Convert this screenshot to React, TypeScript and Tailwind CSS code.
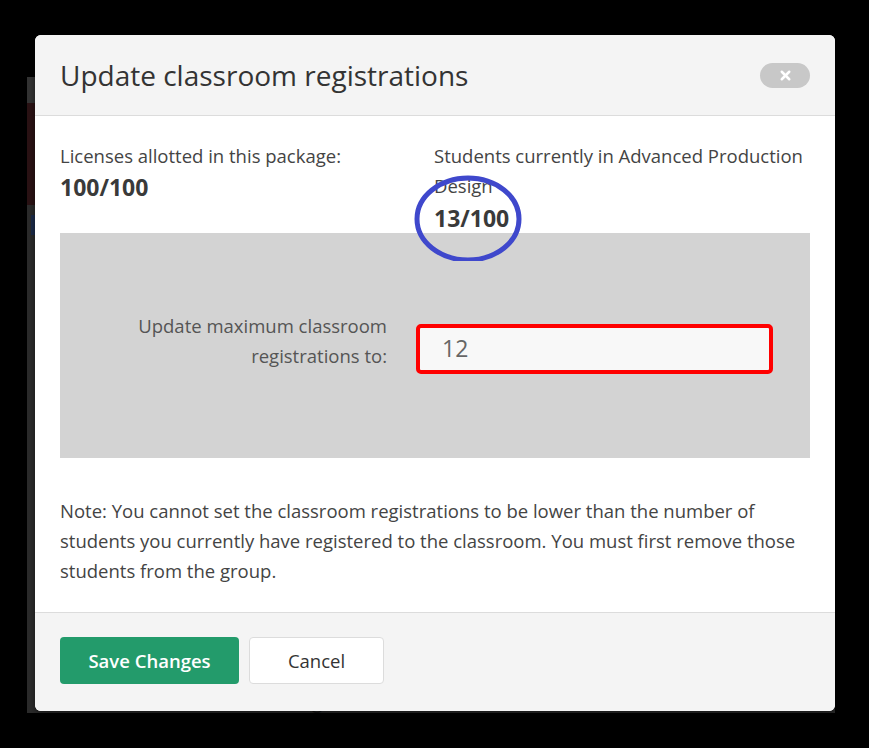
import { X } from 'lucide-react';

const font = { fontFamily: '"Open Sans", Lato, Arial, sans-serif' };

export default function App() {
    return (
        <div className="relative h-[748px] w-[869px] overflow-hidden bg-black" style={font}>
            {/* Dimmed page behind the modal */}
            <div className="ml-[27px] mt-[77px] flex h-[636px] w-[808px] flex-col bg-[#2b2b2b]">
                <div className="h-[26px] bg-[#333]" />
                <div className="h-[102px] bg-[#2a1214]" />
                <div className="mt-[10px] ml-1 h-[20px] w-[4px] bg-[#1c2b4a]" />
                <div className="flex-1" />
                <div className="h-[24px] px-10 text-[20px] leading-[24px] text-[#151515]">Advanced Production Design</div>
            </div>

            {/* Modal */}
            <div className="absolute left-[35px] top-[35px] w-[800px] overflow-hidden rounded-[6px] bg-white shadow-[0_2px_6px_rgba(0,0,0,0.5)]">
                {/* Header */}
                <div className="flex h-[81px] items-center justify-between border-b border-[#dcdcdc] bg-[#f4f4f4] px-[25px]">
                    <h1 className="text-[28px] font-normal text-[#333]">Update classroom registrations</h1>
                    <button className="flex h-[25px] w-[50px] items-center justify-center rounded-full bg-[#c8c8c8] text-white">
                        <X size={15} strokeWidth={4} />
                    </button>
                </div>

                {/* Body */}
                <div className="px-[25px] pt-[25px]">
                    <div className="flex text-[18.5px] leading-[30px] text-[#444]">
                        <div className="w-[374px]">
                            <p>Licenses allotted in this package:</p>
                            <p className="mt-[1px] text-[23px] font-bold text-[#3a3a3a]">100/100</p>
                        </div>
                        <div className="relative w-[376px]">
                            <p>Students currently in Advanced Production Design</p>
                            <p className="text-[23px] font-bold leading-[34px] text-[#3a3a3a]">13/100</p>
                            <svg className="absolute left-[-20px] top-[32px]" width="110" height="88" viewBox="0 0 110 88">
                                <ellipse cx="54" cy="46" rx="51" ry="41" fill="none" stroke="#3f48cc" strokeWidth="5" />
                            </svg>
                        </div>
                    </div>

                    <div className="mt-[-2px] flex h-[225px] items-center bg-[#d3d3d3] pb-[10px]">
                        <label className="w-[327px] text-right text-[18.5px] leading-[30px] text-[#555]">
                            Update maximum classroom
                            <br />
                            registrations to:
                        </label>
                        <div className="ml-[29px] mt-[16px] flex h-[50px] w-[357px] items-center rounded-[5px] border-4 border-[#ff0000] bg-[#f8f8f8] px-[22px] text-[23px] text-[#666]">
                            12
                        </div>
                    </div>

                    <p className="pb-[26px] pt-[38px] text-[18.5px] leading-[30px] text-[#444]">
                        Note: You cannot set the classroom registrations to be lower than the number of students you currently have registered to the classroom. You must first remove those students from the group.
                    </p>
                </div>

                {/* Footer */}
                <div className="flex h-[99px] items-center gap-[10px] border-t border-[#dcdcdc] bg-[#f4f4f4] px-[25px] pb-[3px]">
                    <button className="h-[47px] w-[179px] rounded-[4px] bg-[#239b6b] text-[18.5px] font-semibold text-white">
                        Save Changes
                    </button>
                    <button className="h-[47px] w-[135px] rounded-[4px] border border-[#dcdcdc] bg-white text-[18.5px] text-[#333]">
                        Cancel
                    </button>
                </div>
            </div>
        </div>
    );
}
